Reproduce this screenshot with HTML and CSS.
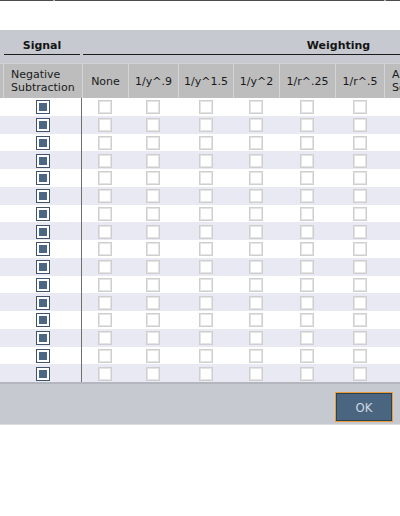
FILE: index.html
```html
<!DOCTYPE html>
<html>
<head>
<meta charset="utf-8">
<link rel="stylesheet" href="styles.css">
</head>
<body>
<div class="topline"></div>
<div class="topgap"></div>
<div class="panel">
  <div class="viewport">
    <div class="sheet">
      <div class="groups">
        <div class="group group-signal"><span class="gtitle">Signal</span></div>
        <div class="group group-weight"><span class="gtitle">Weighting</span></div>
      </div>
      <div class="row head">
        <div class="hc"></div>
        <div class="hc left">Negative<br>Subtraction</div>
        <div class="hc">None</div>
        <div class="hc">1/y^.9</div>
        <div class="hc">1/y^1.5</div>
        <div class="hc">1/y^2</div>
        <div class="hc">1/r^.25</div>
        <div class="hc">1/r^.5</div>
        <div class="hc left">Auto<br>Scale</div>
        <div class="hc">1/x</div>
        <div class="hc">1/x^2</div>
        <div class="hc">1/s</div>
      </div>
      <div class="body">
        <div class="row"><div></div><div class="neg"><span class="cb on"></span></div><div><span class="cb"></span></div><div><span class="cb"></span></div><div><span class="cb"></span></div><div><span class="cb"></span></div><div><span class="cb"></span></div><div><span class="cb"></span></div><div></div><div></div><div></div><div></div></div>
        <div class="row"><div></div><div class="neg"><span class="cb on"></span></div><div><span class="cb"></span></div><div><span class="cb"></span></div><div><span class="cb"></span></div><div><span class="cb"></span></div><div><span class="cb"></span></div><div><span class="cb"></span></div><div></div><div></div><div></div><div></div></div>
        <div class="row"><div></div><div class="neg"><span class="cb on"></span></div><div><span class="cb"></span></div><div><span class="cb"></span></div><div><span class="cb"></span></div><div><span class="cb"></span></div><div><span class="cb"></span></div><div><span class="cb"></span></div><div></div><div></div><div></div><div></div></div>
        <div class="row"><div></div><div class="neg"><span class="cb on"></span></div><div><span class="cb"></span></div><div><span class="cb"></span></div><div><span class="cb"></span></div><div><span class="cb"></span></div><div><span class="cb"></span></div><div><span class="cb"></span></div><div></div><div></div><div></div><div></div></div>
        <div class="row"><div></div><div class="neg"><span class="cb on"></span></div><div><span class="cb"></span></div><div><span class="cb"></span></div><div><span class="cb"></span></div><div><span class="cb"></span></div><div><span class="cb"></span></div><div><span class="cb"></span></div><div></div><div></div><div></div><div></div></div>
        <div class="row"><div></div><div class="neg"><span class="cb on"></span></div><div><span class="cb"></span></div><div><span class="cb"></span></div><div><span class="cb"></span></div><div><span class="cb"></span></div><div><span class="cb"></span></div><div><span class="cb"></span></div><div></div><div></div><div></div><div></div></div>
        <div class="row"><div></div><div class="neg"><span class="cb on"></span></div><div><span class="cb"></span></div><div><span class="cb"></span></div><div><span class="cb"></span></div><div><span class="cb"></span></div><div><span class="cb"></span></div><div><span class="cb"></span></div><div></div><div></div><div></div><div></div></div>
        <div class="row"><div></div><div class="neg"><span class="cb on"></span></div><div><span class="cb"></span></div><div><span class="cb"></span></div><div><span class="cb"></span></div><div><span class="cb"></span></div><div><span class="cb"></span></div><div><span class="cb"></span></div><div></div><div></div><div></div><div></div></div>
        <div class="row"><div></div><div class="neg"><span class="cb on"></span></div><div><span class="cb"></span></div><div><span class="cb"></span></div><div><span class="cb"></span></div><div><span class="cb"></span></div><div><span class="cb"></span></div><div><span class="cb"></span></div><div></div><div></div><div></div><div></div></div>
        <div class="row"><div></div><div class="neg"><span class="cb on"></span></div><div><span class="cb"></span></div><div><span class="cb"></span></div><div><span class="cb"></span></div><div><span class="cb"></span></div><div><span class="cb"></span></div><div><span class="cb"></span></div><div></div><div></div><div></div><div></div></div>
        <div class="row"><div></div><div class="neg"><span class="cb on"></span></div><div><span class="cb"></span></div><div><span class="cb"></span></div><div><span class="cb"></span></div><div><span class="cb"></span></div><div><span class="cb"></span></div><div><span class="cb"></span></div><div></div><div></div><div></div><div></div></div>
        <div class="row"><div></div><div class="neg"><span class="cb on"></span></div><div><span class="cb"></span></div><div><span class="cb"></span></div><div><span class="cb"></span></div><div><span class="cb"></span></div><div><span class="cb"></span></div><div><span class="cb"></span></div><div></div><div></div><div></div><div></div></div>
        <div class="row"><div></div><div class="neg"><span class="cb on"></span></div><div><span class="cb"></span></div><div><span class="cb"></span></div><div><span class="cb"></span></div><div><span class="cb"></span></div><div><span class="cb"></span></div><div><span class="cb"></span></div><div></div><div></div><div></div><div></div></div>
        <div class="row"><div></div><div class="neg"><span class="cb on"></span></div><div><span class="cb"></span></div><div><span class="cb"></span></div><div><span class="cb"></span></div><div><span class="cb"></span></div><div><span class="cb"></span></div><div><span class="cb"></span></div><div></div><div></div><div></div><div></div></div>
        <div class="row"><div></div><div class="neg"><span class="cb on"></span></div><div><span class="cb"></span></div><div><span class="cb"></span></div><div><span class="cb"></span></div><div><span class="cb"></span></div><div><span class="cb"></span></div><div><span class="cb"></span></div><div></div><div></div><div></div><div></div></div>
        <div class="row"><div></div><div class="neg"><span class="cb on"></span></div><div><span class="cb"></span></div><div><span class="cb"></span></div><div><span class="cb"></span></div><div><span class="cb"></span></div><div><span class="cb"></span></div><div><span class="cb"></span></div><div></div><div></div><div></div><div></div></div>
      </div>
    </div>
  </div>
  <div class="footer"><button class="ok">OK</button></div>
</div>
</body>
</html>
```

FILE: styles.css
```css
html, body {
  margin: 0;
  padding: 0;
  background: #ffffff;
  width: 400px;
  height: 516px;
  overflow: hidden;
  font-family: "DejaVu Sans", sans-serif;
}

.topline {
  height: 1px;
  background: linear-gradient(to right, #4d4d4d 0 53px, #b0b0b0 53px 55px, #4d4d4d 55px 384px, #b0b0b0 384px 386px, #4d4d4d 386px);
}

.topgap {
  height: 29px;
}

.panel {
  background: #c7c9d1;
  border-bottom: 1px solid #dcdcdf;
}

.viewport {
  width: 400px;
  overflow: hidden;
}

.sheet {
  width: 594px;
}

.groups {
  display: grid;
  grid-template-columns: 82px 512px;
  height: 33px;
}

.gtitle {
  display: block;
  padding-top: 8px;
  line-height: 16px;
  font-size: 11px;
  font-weight: bold;
  color: #141414;
  text-align: center;
  border-bottom: 1px solid #1c1c1c;
}

.group-signal .gtitle {
  margin: 0 2px 0 4px;
}

.group-weight .gtitle {
  margin-left: 1px;
}

.row {
  display: grid;
  grid-template-columns: 3px 79px 46px 50px 55px 46px 56px 49px 60px 50px 50px 50px;
}

.head {
  height: 35px;
  background: #bdbdbd;
  border-top: 1px solid #d2d2d4;
  box-sizing: border-box;
}

.hc {
  display: flex;
  align-items: center;
  justify-content: center;
  font-size: 11px;
  line-height: 13px;
  color: #1a1a1a;
  border-left: 1px solid #d4d4d4;
  white-space: nowrap;
}

.hc:first-child {
  border-left: none;
}

.hc.left {
  justify-content: flex-start;
  padding-left: 7px;
}

.body {
  border-bottom: 2px solid #b4b6be;
}

.body .row {
  height: 17.75px;
  background: #ffffff;
}

.body .row:nth-child(even) {
  background: #e9e9f3;
}

.body .row > div {
  display: flex;
  align-items: center;
  justify-content: center;
  padding-top: 1px;
}

.body .row > .neg {
  border-right: 1px solid #6e6e6e;
  padding-left: 1px;
}

.cb {
  display: block;
  width: 14px;
  height: 14px;
  box-sizing: border-box;
  background: #ffffff;
  border: 1px solid #cfcfcf;
  box-shadow: inset 0 0 0 1px #e4e4e4;
}

.cb.on {
  border: 1px solid #3f5369;
  box-shadow: inset 0 0 0 2px #ffffff, inset 0 0 0 8px #4c6783;
  background: #4c6783;
}

.footer {
  height: 40px;
  display: flex;
  justify-content: flex-end;
  align-items: flex-start;
  padding: 8px 7px 0 0;
  box-sizing: border-box;
}

.ok {
  width: 58px;
  height: 30px;
  margin: 0;
  padding: 0;
  background: #4a6580;
  border: 1px solid #e99d3a;
  box-shadow: inset 0 0 0 1px #2f4154;
  color: #d3d9e0;
  font-family: "DejaVu Sans Condensed", "DejaVu Sans", sans-serif;
  font-size: 13px;
  cursor: pointer;
}
```
